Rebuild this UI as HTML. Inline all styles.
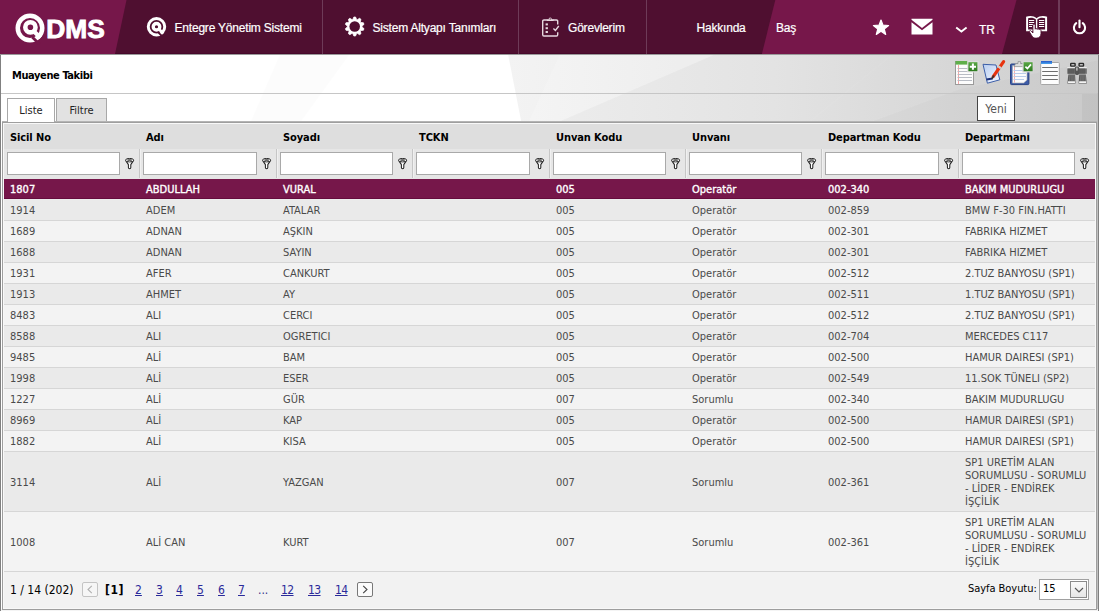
<!DOCTYPE html>
<html lang="tr"><head><meta charset="utf-8"><title>Muayene Takibi</title>
<style>
*{box-sizing:border-box;margin:0;padding:0}
html,body{width:1099px;height:611px;overflow:hidden;background:#fff}
body{position:relative;font-family:"DejaVu Sans Condensed","Liberation Sans",sans-serif;font-size:11px;color:#000}
.abs{position:absolute}
#top{position:absolute;left:0;top:0;width:1099px;height:54px;background:#4f0f30;border-bottom:1px solid #47082b}
#top svg.bg{position:absolute;left:0;top:0}
.mi{position:absolute;top:0;height:54px;line-height:57px;color:#fff;font-family:"Liberation Sans",sans-serif;font-size:12px;letter-spacing:-0.2px;white-space:nowrap;-webkit-text-stroke:0.2px #fff}
.vs{position:absolute;top:0;width:1px;height:54px;background:#6e3b58}
#content{position:absolute;left:0;top:54px;width:1099px;height:557px;background:#fff}
#title{position:absolute;left:12px;top:69px;font-weight:bold;font-size:11px;line-height:14px;letter-spacing:-0.4px;white-space:nowrap}
.tab{position:absolute;top:98px;height:23px;border:1px solid #a8a8a8;border-bottom:none;font-size:11px;line-height:24px;text-align:center;color:#222}
#grid{position:absolute;left:4px;top:124px;width:1091px;height:484px;background:#f2f2f2}
.hd{position:absolute;top:131px;letter-spacing:-0.1px;font-weight:bold;font-size:11px;line-height:14px;white-space:nowrap}
.fi{position:absolute;top:152px;width:113px;height:23px;background:#fff;border:1px solid #a9a9a9}
.fk{position:absolute;top:158px}
.fsep{position:absolute;top:149px;width:2px;height:29px;background:#f0f0f0;border-left:1px solid #c6c6c6}
.row{position:absolute;left:4px;width:1091px;background:#f3f3f3;border-bottom:1px solid #d6d6d6;color:#4a4a4a}
.row.alt{background:#eaeaea}
.row.sel{background:#76174a;color:#fff;-webkit-text-stroke:0.35px #fff;border-bottom-color:#ececec;box-shadow:inset 0 -1px 0 #650c3d}
.c{position:absolute;top:0;bottom:0;display:flex;align-items:center;line-height:13px;white-space:nowrap;font-size:11px}
#pager{position:absolute;left:4px;top:572px;width:1091px;height:36px;background:#f2f2f2}
.pg{position:absolute;top:583px;font-size:12px;line-height:14px;white-space:nowrap}
a.pg{color:#2a2a9a;text-decoration:underline}
</style></head><body>
<div id="top">
<svg class="bg" width="1099" height="54" viewBox="0 0 1099 54">
<polygon points="0,0 126.5,0 115,54 0,54" fill="#76174a"/>
<polygon points="775.3,0 1016.5,0 1002,54 761.9,54" fill="#76174a"/>
</svg>
<!-- logo -->
<svg class="abs" style="left:14px;top:10px" width="96" height="36" viewBox="0 0 96 36">
<g transform="translate(16,18.1)">
<circle r="12.25" fill="none" stroke="#fff" stroke-width="4.5"/>
<circle cx="0.4" cy="-0.8" r="5.1" fill="none" stroke="#fff" stroke-width="4.6"/>
<path d="M2.2 8.8 L9.2 15.8" stroke="#76174a" stroke-width="2.8"/>
<path d="M3.6 2.8 L10.4 9.6" stroke="#fff" stroke-width="4.2"/>
</g>
<text x="32.3" y="27.6" font-family="Liberation Sans, sans-serif" font-weight="bold" font-size="26" fill="#fff" stroke="#fff" stroke-width="0.9" textLength="58.5" lengthAdjust="spacingAndGlyphs">DMS</text>
</svg>
<div class="vs" style="left:322px"></div>
<div class="vs" style="left:518px"></div>
<div class="vs" style="left:646px"></div>
<div class="vs" style="left:1058px;width:2px"></div>
<!-- Q icon -->
<svg class="abs" style="left:145px;top:15px" width="24" height="24" viewBox="0 0 24 24">
<g transform="translate(11.5,11.75) scale(0.669)">
<circle r="12.3" fill="none" stroke="#fff" stroke-width="4.4"/>
<circle r="4.9" fill="none" stroke="#fff" stroke-width="5"/>
<path d="M2.6 8.4 L9.6 15.4" stroke="#4f0f30" stroke-width="2.8"/>
<path d="M3.5 3.5 L10.2 10.2" stroke="#fff" stroke-width="4.2"/>
</g>
</svg>
<!-- gear -->
<svg class="abs" style="left:344px;top:16px" width="22" height="22" viewBox="-10.7 -10.5 22 22">
<path d="M-1.88 -7.05 L-0.85 -9.46 L0.85 -9.46 L1.88 -7.05 L2.63 -6.81 L4.87 -8.16 L6.25 -7.15 L5.66 -4.60 L6.13 -3.96 L8.73 -3.74 L9.26 -2.11 L7.29 -0.40 L7.29 0.40 L9.26 2.11 L8.73 3.74 L6.13 3.96 L5.66 4.60 L6.25 7.15 L4.87 8.16 L2.63 6.81 L1.88 7.05 L0.85 9.46 L-0.85 9.46 L-1.88 7.05 L-2.63 6.81 L-4.87 8.16 L-6.25 7.15 L-5.66 4.60 L-6.13 3.96 L-8.73 3.74 L-9.26 2.11 L-7.29 0.40 L-7.29 -0.40 L-9.26 -2.11 L-8.73 -3.74 L-6.13 -3.96 L-5.66 -4.60 L-6.25 -7.15 L-4.87 -8.16 L-2.63 -6.81 Z" fill="#fff" stroke="#fff" stroke-width="0.8" stroke-linejoin="round"/>
<circle r="5.3" fill="#4f0f30"/>
</svg>
<!-- clipboard -->
<svg class="abs" style="left:541px;top:16px" width="21" height="22" viewBox="0 0 21 22">
<path d="M6.5 4 H2.9 a1.2 1.2 0 0 0 -1.2 1.2 V18.8 a1.2 1.2 0 0 0 1.2 1.2 H15.5 a1.2 1.2 0 0 0 1.2 -1.2 V16.2 M11.5 4 H15.5 a1.2 1.2 0 0 1 1.2 1.2 V8.6" fill="none" stroke="#e6d8df" stroke-width="1.4"/>
<path d="M5.8 4.9 V3.2 H7.6 a1.6 1.8 0 0 1 3.2 0 H12.6 V4.9 Z" fill="#e6d8df"/>
<circle cx="9.2" cy="2.9" r="0.7" fill="#4f0f30"/>
<rect x="4.6" y="7.4" width="2.3" height="2" fill="#e6d8df"/><rect x="4.6" y="11.2" width="2.3" height="2" fill="#e6d8df"/><rect x="4.6" y="15" width="2.3" height="2" fill="#e6d8df"/>
<path d="M12.4 12.4 L14.4 14.4 L17.8 10" fill="none" stroke="#e6d8df" stroke-width="1.4"/>
</svg>
<!-- star -->
<svg class="abs" style="left:872px;top:19px" width="18" height="17" viewBox="0 0 18 17"><path d="M9 1 L11 6.2 L16.6 6.5 L12.2 10 L13.7 15.4 L9 12.3 L4.3 15.4 L5.8 10 L1.4 6.5 L7 6.2 Z" fill="#fff" stroke="#fff" stroke-width="1.2" stroke-linejoin="round"/></svg>
<!-- mail -->
<svg class="abs" style="left:911px;top:18px" width="22" height="17" viewBox="0 0 22 17"><path d="M0.5 0.8 H21.5 V1.8 L11 10 L0.5 1.8 Z" fill="#fff"/><path d="M0.5 4.2 L11 12.3 L21.5 4.2 V16.4 H0.5 Z" fill="#fff"/></svg>
<!-- chevron -->
<svg class="abs" style="left:955px;top:26px" width="13" height="8" viewBox="0 0 13 8"><path d="M1.2 1.6 L6.4 5.6 L11.6 1.6" fill="none" stroke="#fff" stroke-width="1.9"/></svg>
<!-- book -->
<svg class="abs" style="left:1024px;top:14px" width="26" height="26" viewBox="1024 14 26 26">
<path d="M1026.1 16.8 C1029 15.5 1034 15.5 1036.6 18.2 C1039.2 15.5 1044.2 15.5 1047.1 16.8 V31.2 H1026.1 Z" fill="#fff"/>
<path d="M1028.1 18.2 C1030.5 17.3 1034 17.5 1035.9 19.6 V29.4 H1028.1 Z" fill="#4f0f30"/>
<path d="M1045.1 18.2 C1042.7 17.3 1039.2 17.5 1037.3 19.6 V29.4 H1045.1 Z" fill="#4f0f30"/>
<path d="M1029 20.5 H1034.2 M1029 22.5 H1034.2 M1029 24.5 H1034.2 M1029 26.5 H1032 M1039 20.5 H1044.2 M1039 22.5 H1044.2 M1039 24.5 H1044.2 M1039 26.5 H1044.2" stroke="#fff" stroke-width="1.15"/>
<path d="M1032.9 25.2 c0 -1.6 2.3 -1.6 2.3 0 v4 c0.2 -1 2 -0.9 2 0.2 c0.3 -0.9 1.9 -0.7 1.9 0.4 c0.4 -0.8 1.9 -0.5 1.9 0.7 v3 c0 2.8 -1.8 4.6 -4.2 4.6 h-1.2 c-1.6 0 -2.8 -0.8 -3.7 -2.2 l-2.4 -3.8 c-0.7 -1.2 0.9 -2.1 1.8 -1 l1.6 1.9 Z" fill="#fff" stroke="#4f0f30" stroke-width="0.9"/>
</svg>
<!-- power -->
<svg class="abs" style="left:1071px;top:19px" width="17" height="17" viewBox="0 0 17 17"><path d="M5.2 4.2 A5.6 5.6 0 1 0 11.8 4.2" fill="none" stroke="#fff" stroke-width="2.1" stroke-linecap="round"/><path d="M8.5 1.6 V8.2" stroke="#fff" stroke-width="2.1" stroke-linecap="round"/></svg>
<div class="mi" style="left:174.5px">Entegre Yönetim Sistemi</div>
<div class="mi" style="left:372.5px">Sistem Altyapı Tanımları</div>
<div class="mi" style="left:568px">Görevlerim</div>
<div class="mi" style="left:696.5px">Hakkında</div>
<div class="mi" style="left:776px">Baş</div>
<div class="mi" style="left:979px;top:2px">TR</div>
</div>
<div id="content">
<svg class="abs" style="left:0;top:0" width="1099" height="557" viewBox="0 54 1099 557">
<defs><linearGradient id="g1" gradientUnits="userSpaceOnUse" x1="508" x2="1099" y1="0" y2="0"><stop offset="0" stop-color="#f3f3f3"/><stop offset="0.45" stop-color="#e8e8e8"/><stop offset="0.8" stop-color="#dadada"/><stop offset="1" stop-color="#d3d3d3"/></linearGradient></defs>
<rect x="0" y="54" width="1099" height="557" fill="#fff"/>
<polygon points="508,54 1099,54 1099,611 1060,611 1060,123 521.5,123" fill="url(#g1)"/>
<polygon points="560,54 716,54 556,123 528,123" fill="#fff" opacity="0.15"/>
<polygon points="716,54 893,54 808,123 556,123" fill="#000" opacity="0.02"/>
<polygon points="893,54 1099,54 1099,60 960,89 868,123 808,123" fill="#000" opacity="0.02"/>
<polygon points="1099,60 1099,123 868,123 960,89" fill="#000" opacity="0.04"/>
<rect x="1082" y="94" width="17" height="30" fill="#000" opacity="0.035"/>
<polygon points="280,54 350,54 300,123 250,123" fill="#000" opacity="0.012"/>
</svg>
</div>
<div class="abs" style="left:0;top:54px;width:1px;height:557px;background:#808080"></div>
<div class="abs" style="left:1098px;top:54px;width:1px;height:557px;background:#808080"></div>
<div class="abs" style="left:1097px;top:93px;width:1px;height:518px;background:#c0c0c0"></div>
<div class="abs" style="left:1px;top:93px;width:1096px;height:1px;background:#c6c6c6"></div>
<div class="abs" style="left:1px;top:609px;width:1097px;height:2px;background:#f4f4f4"></div>
<div class="abs" style="left:0;top:54px;width:1099px;height:1px;background:#9a9a9a"></div>
<!-- grid frame -->
<div class="abs" style="left:2px;top:121px;width:1095px;height:489px;background:#9e9e9e"></div>
<div class="abs" style="left:2px;top:121px;width:1095px;height:1px;background:#b4b4b4"></div>
<div class="abs" style="left:3px;top:123px;width:1093px;height:486px;background:#f8f8f8"></div>
<div id="title">Muayene Takibi</div>
<div class="tab" style="left:7px;width:48px;height:24px;background:#fff">Liste</div>
<div class="tab" style="left:56px;width:51px;background:#e2e2e2">Filtre</div>
<!-- toolbar icons -->
<svg class="abs" style="left:953px;top:59px" width="138" height="28" viewBox="953 59 138 28">
<defs>
<linearGradient id="gg" x1="0" y1="0" x2="0" y2="1"><stop offset="0" stop-color="#5aa845"/><stop offset="1" stop-color="#2c7a1f"/></linearGradient>
<linearGradient id="gb" x1="0" y1="0" x2="0" y2="1"><stop offset="0" stop-color="#2456c8"/><stop offset="1" stop-color="#4aa6ee"/></linearGradient>
<linearGradient id="gs" x1="0" y1="0" x2="1" y2="1"><stop offset="0" stop-color="#b9cdf0"/><stop offset="1" stop-color="#f4f8ff"/></linearGradient>
</defs>
<!-- new -->
<rect x="955.5" y="61.5" width="18" height="23" fill="#fcfcfc" stroke="#9a9a9a"/>
<rect x="955.5" y="61" width="13" height="3.6" fill="#5fae4a"/>
<path d="M958.5 65 V84" stroke="#f3a5a5" stroke-width="1"/>
<path d="M957.5 68.5 H972 M957.5 71.5 H972 M957.5 74.5 H972 M957.5 77.5 H972 M957.5 80.5 H972" stroke="#b8bcc4" stroke-width="1"/>
<rect x="967.2" y="61" width="11.4" height="11.4" fill="#dedede"/><rect x="968.4" y="62.2" width="9" height="9" fill="url(#gg)"/>
<path d="M972.9 63.6 V69.8 M969.8 66.7 H976" stroke="#fff" stroke-width="2"/>
<!-- edit -->
<path d="M983 64.3 L996 65 L999.8 79.8 L987.4 83.2 Z" fill="url(#gs)" stroke="#3c5ea8" stroke-width="1"/>
<path d="M986.5 79.6 L992.6 78.6" stroke="#1a2f7a" stroke-width="2"/>
<path d="M1003.6 61.6 L993.2 76.6" stroke="#e8330f" stroke-width="3.2" stroke-linecap="round"/>
<path d="M1000.2 66.4 L998.9 68.3" stroke="#d0d0d0" stroke-width="3.4"/>
<path d="M993.6 76 L992 78.4" stroke="#333" stroke-width="1.6" stroke-linecap="round"/>
<!-- clipboard -->
<rect x="1010.5" y="64" width="18.4" height="20.6" rx="1" fill="#3d5ca8" stroke="#2b4384"/>
<path d="M1012.5 65.6 H1027 V80 L1023.6 83 H1012.5 Z" fill="#fbfbfd" stroke="#aaa" stroke-width="0.6"/>
<path d="M1014.5 66 V82.6" stroke="#f3a5a5" stroke-width="0.9"/>
<path d="M1013.5 70.5 H1026 M1013.5 73.5 H1026 M1013.5 76.5 H1026 M1013.5 79.5 H1024" stroke="#b9cdea" stroke-width="1"/>
<path d="M1014 66.6 L1015.6 63.6 H1018 V61.6 H1020.6 V63.6 H1023 L1024.6 66.6 Z" fill="#dcdcdc" stroke="#8a8a8a" stroke-width="0.7"/>
<rect x="1022.4" y="61" width="11.4" height="11.4" fill="#d6d6d6"/><rect x="1023.6" y="62.2" width="9" height="9" fill="url(#gg)"/>
<path d="M1025.4 66.6 L1027.4 68.6 L1031 64.4" fill="none" stroke="#fff" stroke-width="1.7"/>
<!-- list -->
<rect x="1040.7" y="62.5" width="18.6" height="22" rx="0.8" fill="#fdfdfd" stroke="#a6a6a6"/>
<rect x="1041" y="61" width="11" height="3" fill="url(#gb)"/>
<path d="M1042.6 67.5 H1057.4 M1042.6 71.5 H1057.4 M1042.6 75.5 H1057.4 M1042.6 79.5 H1057.4" stroke="#6e6e6e" stroke-width="1.1" stroke-linecap="round"/>
<!-- binoculars -->
<g>
<rect x="1070" y="62.8" width="5.8" height="4" rx="1.2" fill="#2a2a2a"/><rect x="1078.4" y="62.8" width="5.8" height="4" rx="1.2" fill="#2a2a2a"/>
<rect x="1071.3" y="64" width="3.2" height="1.5" rx="0.6" fill="#bdbdbd"/><rect x="1079.7" y="64" width="3.2" height="1.5" rx="0.6" fill="#bdbdbd"/>
<rect x="1067.3" y="67.2" width="8.8" height="1.4" fill="#f2f2f2"/><rect x="1078" y="67.2" width="8.8" height="1.4" fill="#f2f2f2"/>
<rect x="1067.3" y="68.4" width="8.8" height="5.4" fill="#6a6a6a"/><rect x="1078" y="68.4" width="8.8" height="5.4" fill="#6a6a6a"/>
<path d="M1069 68.4 V73.8 M1071 68.4 V73.8 M1073 68.4 V73.8 M1080 68.4 V73.8 M1082 68.4 V73.8 M1084 68.4 V73.8" stroke="#4a4a4a" stroke-width="0.8"/>
<rect x="1074.8" y="66.4" width="4.4" height="8.6" rx="1.8" fill="#555"/>
<rect x="1076.3" y="67.6" width="1.2" height="3" fill="#ddd"/>
<path d="M1068.4 74.6 H1075 L1075.6 83.6 H1067.3 Z" fill="#5c5c5c"/><path d="M1079.2 74.6 H1085.8 L1086.9 83.6 H1078.6 Z" fill="#5c5c5c"/>
<path d="M1070 75 L1069.6 81 M1072 75 V81 M1074 75 L1074.2 81 M1081 75 L1080.8 81 M1083 75 V81 M1085 75 L1085.4 81" stroke="#808080" stroke-width="0.8"/>
<rect x="1067.8" y="81.2" width="7.4" height="1.7" rx="0.6" fill="#f4f4f4"/><rect x="1079" y="81.2" width="7.4" height="1.7" rx="0.6" fill="#f4f4f4"/>
</g>
</svg>
<div class="abs" style="left:977px;top:96px;width:38px;height:25px;background:#fff;border:1px solid #444;font-size:12px;line-height:25px;text-align:center;color:#555">Yeni</div>
<div id="grid"></div>
<div class="abs" style="left:4px;top:124px;width:1091px;height:25px;background:#dedede"></div>
<div class="abs" style="left:4px;top:149px;width:1091px;height:30px;background:#e6e6e6"></div>
<div class="hd" style="left:10.0px">Sicil No</div>
<div class="fi" style="left:7.0px;width:113px"></div>
<svg class="fk" style="left:125.0px" width="10" height="12" viewBox="0 0 10 12"><path d="M0.6 2.4 L3.4 6.6 V9.6 a1.2 1.2 0 0 0 2.4 0 V6.6 L8.6 2.4" fill="#fff" stroke="#222" stroke-width="1.05" stroke-linejoin="round"/><ellipse cx="4.6" cy="2.2" rx="4.1" ry="1.75" fill="#fff" stroke="#222" stroke-width="1"/><ellipse cx="4.6" cy="2" rx="2.5" ry="0.85" fill="#3a3a3a"/></svg>
<div class="hd" style="left:146.0px">Adı</div>
<div class="fi" style="left:143.0px;width:114px"></div>
<svg class="fk" style="left:262.0px" width="10" height="12" viewBox="0 0 10 12"><path d="M0.6 2.4 L3.4 6.6 V9.6 a1.2 1.2 0 0 0 2.4 0 V6.6 L8.6 2.4" fill="#fff" stroke="#222" stroke-width="1.05" stroke-linejoin="round"/><ellipse cx="4.6" cy="2.2" rx="4.1" ry="1.75" fill="#fff" stroke="#222" stroke-width="1"/><ellipse cx="4.6" cy="2" rx="2.5" ry="0.85" fill="#3a3a3a"/></svg>
<div class="fsep" style="left:139.0px"></div>
<div class="hd" style="left:283.0px">Soyadı</div>
<div class="fi" style="left:280.0px;width:113px"></div>
<svg class="fk" style="left:398.0px" width="10" height="12" viewBox="0 0 10 12"><path d="M0.6 2.4 L3.4 6.6 V9.6 a1.2 1.2 0 0 0 2.4 0 V6.6 L8.6 2.4" fill="#fff" stroke="#222" stroke-width="1.05" stroke-linejoin="round"/><ellipse cx="4.6" cy="2.2" rx="4.1" ry="1.75" fill="#fff" stroke="#222" stroke-width="1"/><ellipse cx="4.6" cy="2" rx="2.5" ry="0.85" fill="#3a3a3a"/></svg>
<div class="fsep" style="left:276.0px"></div>
<div class="hd" style="left:419.0px">TCKN</div>
<div class="fi" style="left:416.0px;width:114px"></div>
<svg class="fk" style="left:535.0px" width="10" height="12" viewBox="0 0 10 12"><path d="M0.6 2.4 L3.4 6.6 V9.6 a1.2 1.2 0 0 0 2.4 0 V6.6 L8.6 2.4" fill="#fff" stroke="#222" stroke-width="1.05" stroke-linejoin="round"/><ellipse cx="4.6" cy="2.2" rx="4.1" ry="1.75" fill="#fff" stroke="#222" stroke-width="1"/><ellipse cx="4.6" cy="2" rx="2.5" ry="0.85" fill="#3a3a3a"/></svg>
<div class="fsep" style="left:412.0px"></div>
<div class="hd" style="left:556.0px">Unvan Kodu</div>
<div class="fi" style="left:553.0px;width:113px"></div>
<svg class="fk" style="left:671.0px" width="10" height="12" viewBox="0 0 10 12"><path d="M0.6 2.4 L3.4 6.6 V9.6 a1.2 1.2 0 0 0 2.4 0 V6.6 L8.6 2.4" fill="#fff" stroke="#222" stroke-width="1.05" stroke-linejoin="round"/><ellipse cx="4.6" cy="2.2" rx="4.1" ry="1.75" fill="#fff" stroke="#222" stroke-width="1"/><ellipse cx="4.6" cy="2" rx="2.5" ry="0.85" fill="#3a3a3a"/></svg>
<div class="fsep" style="left:549.0px"></div>
<div class="hd" style="left:692.0px">Unvanı</div>
<div class="fi" style="left:689.0px;width:113px"></div>
<svg class="fk" style="left:807.0px" width="10" height="12" viewBox="0 0 10 12"><path d="M0.6 2.4 L3.4 6.6 V9.6 a1.2 1.2 0 0 0 2.4 0 V6.6 L8.6 2.4" fill="#fff" stroke="#222" stroke-width="1.05" stroke-linejoin="round"/><ellipse cx="4.6" cy="2.2" rx="4.1" ry="1.75" fill="#fff" stroke="#222" stroke-width="1"/><ellipse cx="4.6" cy="2" rx="2.5" ry="0.85" fill="#3a3a3a"/></svg>
<div class="fsep" style="left:685.0px"></div>
<div class="hd" style="left:828.0px">Departman Kodu</div>
<div class="fi" style="left:825.0px;width:114px"></div>
<svg class="fk" style="left:944.0px" width="10" height="12" viewBox="0 0 10 12"><path d="M0.6 2.4 L3.4 6.6 V9.6 a1.2 1.2 0 0 0 2.4 0 V6.6 L8.6 2.4" fill="#fff" stroke="#222" stroke-width="1.05" stroke-linejoin="round"/><ellipse cx="4.6" cy="2.2" rx="4.1" ry="1.75" fill="#fff" stroke="#222" stroke-width="1"/><ellipse cx="4.6" cy="2" rx="2.5" ry="0.85" fill="#3a3a3a"/></svg>
<div class="fsep" style="left:821.0px"></div>
<div class="hd" style="left:965.0px">Departmanı</div>
<div class="fi" style="left:962.0px;width:113px"></div>
<svg class="fk" style="left:1080.0px" width="10" height="12" viewBox="0 0 10 12"><path d="M0.6 2.4 L3.4 6.6 V9.6 a1.2 1.2 0 0 0 2.4 0 V6.6 L8.6 2.4" fill="#fff" stroke="#222" stroke-width="1.05" stroke-linejoin="round"/><ellipse cx="4.6" cy="2.2" rx="4.1" ry="1.75" fill="#fff" stroke="#222" stroke-width="1"/><ellipse cx="4.6" cy="2" rx="2.5" ry="0.85" fill="#3a3a3a"/></svg>
<div class="fsep" style="left:958.0px"></div>
<div class="row sel" style="top:179px;height:21px">
<div class="c" style="left:6.0px">1807</div>
<div class="c" style="left:142.0px">ABDULLAH</div>
<div class="c" style="left:279.0px">VURAL</div>
<div class="c" style="left:552.0px">005</div>
<div class="c" style="left:688.0px">Operatör</div>
<div class="c" style="left:824.0px">002-340</div>
<div class="c" style="left:961.0px">BAKIM MUDURLUGU</div>
</div>
<div class="row alt" style="top:200px;height:21px">
<div class="c" style="left:6.0px">1914</div>
<div class="c" style="left:142.0px">ADEM</div>
<div class="c" style="left:279.0px">ATALAR</div>
<div class="c" style="left:552.0px">005</div>
<div class="c" style="left:688.0px">Operatör</div>
<div class="c" style="left:824.0px">002-859</div>
<div class="c" style="left:961.0px">BMW F-30 FIN.HATTI</div>
</div>
<div class="row" style="top:221px;height:21px">
<div class="c" style="left:6.0px">1689</div>
<div class="c" style="left:142.0px">ADNAN</div>
<div class="c" style="left:279.0px">AŞKIN</div>
<div class="c" style="left:552.0px">005</div>
<div class="c" style="left:688.0px">Operatör</div>
<div class="c" style="left:824.0px">002-301</div>
<div class="c" style="left:961.0px">FABRIKA HIZMET</div>
</div>
<div class="row alt" style="top:242px;height:21px">
<div class="c" style="left:6.0px">1688</div>
<div class="c" style="left:142.0px">ADNAN</div>
<div class="c" style="left:279.0px">SAYIN</div>
<div class="c" style="left:552.0px">005</div>
<div class="c" style="left:688.0px">Operatör</div>
<div class="c" style="left:824.0px">002-301</div>
<div class="c" style="left:961.0px">FABRIKA HIZMET</div>
</div>
<div class="row" style="top:263px;height:21px">
<div class="c" style="left:6.0px">1931</div>
<div class="c" style="left:142.0px">AFER</div>
<div class="c" style="left:279.0px">CANKURT</div>
<div class="c" style="left:552.0px">005</div>
<div class="c" style="left:688.0px">Operatör</div>
<div class="c" style="left:824.0px">002-512</div>
<div class="c" style="left:961.0px">2.TUZ BANYOSU (SP1)</div>
</div>
<div class="row alt" style="top:284px;height:21px">
<div class="c" style="left:6.0px">1913</div>
<div class="c" style="left:142.0px">AHMET</div>
<div class="c" style="left:279.0px">AY</div>
<div class="c" style="left:552.0px">005</div>
<div class="c" style="left:688.0px">Operatör</div>
<div class="c" style="left:824.0px">002-511</div>
<div class="c" style="left:961.0px">1.TUZ BANYOSU (SP1)</div>
</div>
<div class="row" style="top:305px;height:21px">
<div class="c" style="left:6.0px">8483</div>
<div class="c" style="left:142.0px">ALI</div>
<div class="c" style="left:279.0px">CERCI</div>
<div class="c" style="left:552.0px">005</div>
<div class="c" style="left:688.0px">Operatör</div>
<div class="c" style="left:824.0px">002-512</div>
<div class="c" style="left:961.0px">2.TUZ BANYOSU (SP1)</div>
</div>
<div class="row alt" style="top:326px;height:21px">
<div class="c" style="left:6.0px">8588</div>
<div class="c" style="left:142.0px">ALI</div>
<div class="c" style="left:279.0px">OGRETICI</div>
<div class="c" style="left:552.0px">005</div>
<div class="c" style="left:688.0px">Operatör</div>
<div class="c" style="left:824.0px">002-704</div>
<div class="c" style="left:961.0px">MERCEDES C117</div>
</div>
<div class="row" style="top:347px;height:21px">
<div class="c" style="left:6.0px">9485</div>
<div class="c" style="left:142.0px">ALİ</div>
<div class="c" style="left:279.0px">BAM</div>
<div class="c" style="left:552.0px">005</div>
<div class="c" style="left:688.0px">Operatör</div>
<div class="c" style="left:824.0px">002-500</div>
<div class="c" style="left:961.0px">HAMUR DAIRESI (SP1)</div>
</div>
<div class="row alt" style="top:368px;height:21px">
<div class="c" style="left:6.0px">1998</div>
<div class="c" style="left:142.0px">ALİ</div>
<div class="c" style="left:279.0px">ESER</div>
<div class="c" style="left:552.0px">005</div>
<div class="c" style="left:688.0px">Operatör</div>
<div class="c" style="left:824.0px">002-549</div>
<div class="c" style="left:961.0px">11.SOK TÜNELI (SP2)</div>
</div>
<div class="row" style="top:389px;height:21px">
<div class="c" style="left:6.0px">1227</div>
<div class="c" style="left:142.0px">ALİ</div>
<div class="c" style="left:279.0px">GÜR</div>
<div class="c" style="left:552.0px">007</div>
<div class="c" style="left:688.0px">Sorumlu</div>
<div class="c" style="left:824.0px">002-340</div>
<div class="c" style="left:961.0px">BAKIM MUDURLUGU</div>
</div>
<div class="row alt" style="top:410px;height:21px">
<div class="c" style="left:6.0px">8969</div>
<div class="c" style="left:142.0px">ALİ</div>
<div class="c" style="left:279.0px">KAP</div>
<div class="c" style="left:552.0px">005</div>
<div class="c" style="left:688.0px">Operatör</div>
<div class="c" style="left:824.0px">002-500</div>
<div class="c" style="left:961.0px">HAMUR DAIRESI (SP1)</div>
</div>
<div class="row" style="top:431px;height:21px">
<div class="c" style="left:6.0px">1882</div>
<div class="c" style="left:142.0px">ALİ</div>
<div class="c" style="left:279.0px">KISA</div>
<div class="c" style="left:552.0px">005</div>
<div class="c" style="left:688.0px">Operatör</div>
<div class="c" style="left:824.0px">002-500</div>
<div class="c" style="left:961.0px">HAMUR DAIRESI (SP1)</div>
</div>
<div class="row alt" style="top:452px;height:60px">
<div class="c" style="left:6.0px;padding-top:1px">3114</div>
<div class="c" style="left:142.0px;padding-top:1px">ALİ</div>
<div class="c" style="left:279.0px;padding-top:1px">YAZGAN</div>
<div class="c" style="left:552.0px;padding-top:1px">007</div>
<div class="c" style="left:688.0px;padding-top:1px">Sorumlu</div>
<div class="c" style="left:824.0px;padding-top:1px">002-361</div>
<div class="c" style="left:961.0px">SP1 URETİM ALAN<br>SORUMLUSU - SORUMLU<br>- LİDER - ENDİREK<br>İŞÇİLİK</div>
</div>
<div class="row" style="top:512px;height:60px">
<div class="c" style="left:6.0px;padding-top:1px">1008</div>
<div class="c" style="left:142.0px;padding-top:1px">ALİ CAN</div>
<div class="c" style="left:279.0px;padding-top:1px">KURT</div>
<div class="c" style="left:552.0px;padding-top:1px">007</div>
<div class="c" style="left:688.0px;padding-top:1px">Sorumlu</div>
<div class="c" style="left:824.0px;padding-top:1px">002-361</div>
<div class="c" style="left:961.0px">SP1 URETİM ALAN<br>SORUMLUSU - SORUMLU<br>- LİDER - ENDİREK<br>İŞÇİLİK</div>
</div>
<div id="pager"></div>
<div class="pg" style="left:10px">1 / 14 (202)</div>
<div class="pg" style="left:105px;font-weight:bold;letter-spacing:0.5px">[1]</div>
<a class="pg" style="left:135px">2</a><a class="pg" style="left:156px">3</a><a class="pg" style="left:176px">4</a><a class="pg" style="left:197px">5</a><a class="pg" style="left:218px">6</a><a class="pg" style="left:238px">7</a>
<div class="pg" style="left:258px;color:#33338a">...</div>
<a class="pg" style="left:281px;letter-spacing:-0.6px">12</a><a class="pg" style="left:308px;letter-spacing:-0.6px">13</a><a class="pg" style="left:335px;letter-spacing:-0.6px">14</a>
<div class="pg" style="left:968px;font-size:11px;letter-spacing:-0.05px;top:582px">Sayfa Boyutu:</div>
<div class="abs" style="left:82px;top:582px;width:16px;height:15px;border:1px solid #c4c4c4;border-radius:2px;background:#f6f6f6"></div>
<svg class="abs" style="left:86px;top:585px" width="8" height="9" viewBox="0 0 8 9"><path d="M5.8 0.8 L2 4.5 L5.8 8.2" fill="none" stroke="#b0b0b0" stroke-width="1.1"/></svg>
<div class="abs" style="left:357px;top:582px;width:16px;height:15px;border:1px solid #787878;border-radius:2px;background:#fbfbfb"></div>
<svg class="abs" style="left:361px;top:585px" width="8" height="9" viewBox="0 0 8 9"><path d="M2.2 0.8 L6 4.5 L2.2 8.2" fill="none" stroke="#444" stroke-width="1.1"/></svg>
<div class="abs" style="left:1039px;top:579px;width:50px;height:21px;border:1px solid #a0a0a0;background:#fff"></div>
<div class="abs" style="left:1043px;top:582px;font-size:11px;line-height:14px;color:#000">15</div>
<div class="abs" style="left:1070px;top:581px;width:17px;height:17px;border:1px solid #8a8a8a;background:linear-gradient(#fafafa,#e6e6e6)"></div>
<svg class="abs" style="left:1073.5px;top:587px" width="10" height="7" viewBox="0 0 10 7"><path d="M1 1 L5 5 L9 1" fill="none" stroke="#555" stroke-width="1.1"/></svg>
</body></html>
